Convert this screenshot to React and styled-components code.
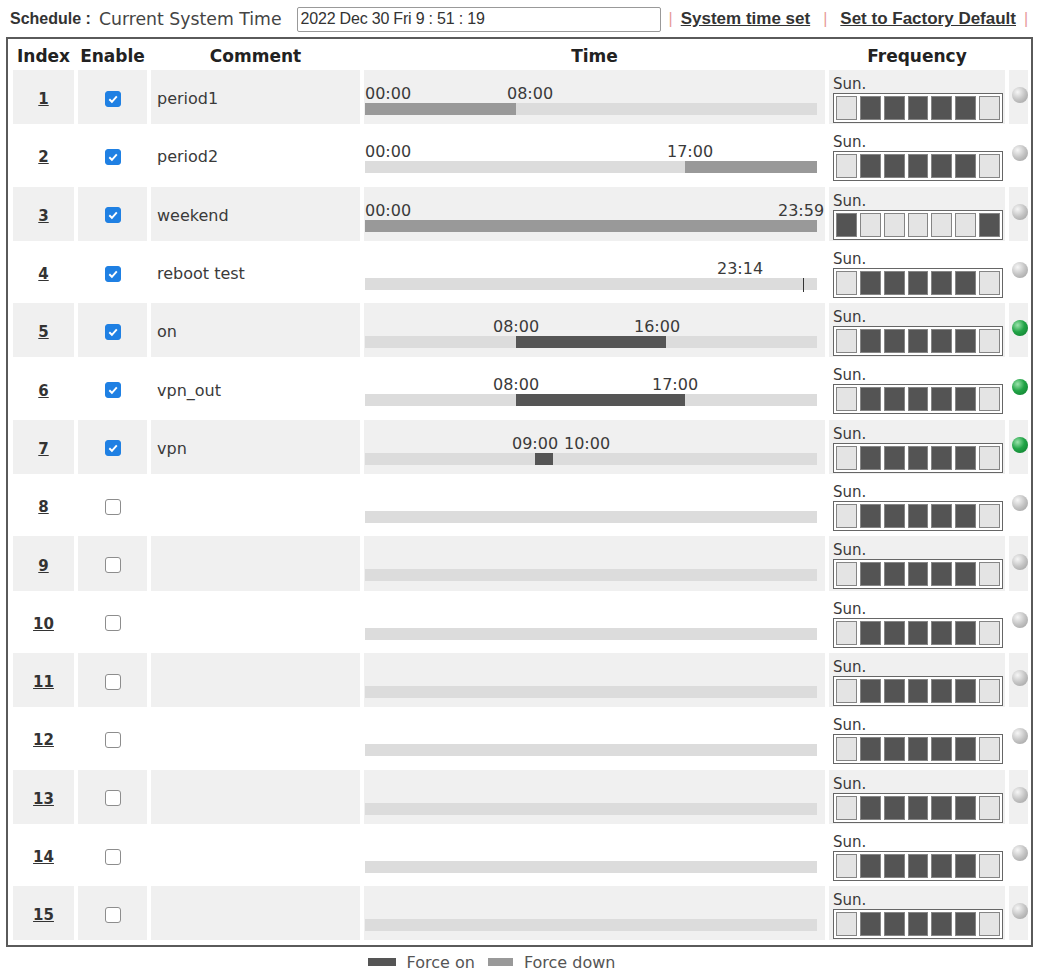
import React from "react";
import styled, { createGlobalStyle } from "styled-components";

const GlobalStyle = createGlobalStyle`
  body {
    margin: 0;
    background: #fff;
    font-family: "DejaVu Sans", Verdana, sans-serif;
    color: #333;
    overflow: hidden;
  }
`;

// 1 = day selected (dark square)
const WEEKDAYS = [0, 1, 1, 1, 1, 1, 0];

const schedules = [
  {
    id: 1, enabled: true, comment: "period1", led: "off", days: WEEKDAYS,
    labels: [[0, "00:00"], [142, "08:00"]],
    segment: { from: 0, to: 8, kind: "down" },
  },
  {
    id: 2, enabled: true, comment: "period2", led: "off", days: WEEKDAYS,
    labels: [[0, "00:00"], [302, "17:00"]],
    segment: { from: 17, to: 24, kind: "down" },
  },
  {
    id: 3, enabled: true, comment: "weekend", led: "off", days: [1, 0, 0, 0, 0, 0, 1],
    labels: [[0, "00:00"], [413, "23:59"]],
    segment: { from: 0, to: 23.983, kind: "down" },
  },
  {
    id: 4, enabled: true, comment: "reboot test", led: "off", days: WEEKDAYS,
    labels: [[352, "23:14"]],
    mark: 23.233,
  },
  {
    id: 5, enabled: true, comment: "on", led: "on", days: WEEKDAYS,
    labels: [[128, "08:00"], [269, "16:00"]],
    segment: { from: 8, to: 16, kind: "on" },
  },
  {
    id: 6, enabled: true, comment: "vpn_out", led: "on", days: WEEKDAYS,
    labels: [[128, "08:00"], [287, "17:00"]],
    segment: { from: 8, to: 17, kind: "on" },
  },
  {
    id: 7, enabled: true, comment: "vpn", led: "on", days: WEEKDAYS,
    labels: [[147, "09:00"], [199, "10:00"]],
    segment: { from: 9, to: 10, kind: "on" },
  },
];
for (let i = 8; i <= 15; i++) {
  schedules.push({ id: i, enabled: false, comment: "", led: "off", days: WEEKDAYS, labels: [] });
}

const Page = styled.div`
  padding: 6px 4px 0 6px;
`;

const TopBar = styled.div`
  display: flex;
  align-items: center;
  height: 26px;
  padding-left: 4px;
  margin-bottom: 5px;
  white-space: nowrap;

  & > * {
    flex-shrink: 0;
  }
`;

const BarTitle = styled.span`
  font-family: "Liberation Sans", Arial, sans-serif;
  font-weight: bold;
  font-size: 16px;
  color: #333;
`;

const BarText = styled.span`
  font-size: 17.3px;
  color: #444;
  margin-left: 8px;
`;

const TimeBox = styled.div`
  box-sizing: border-box;
  width: 364px;
  height: 25px;
  margin-left: 15px;
  border: 1px solid #999;
  border-radius: 2px;
  padding: 0 3px;
  display: flex;
  align-items: center;
  font-family: "Liberation Sans", Arial, sans-serif;
  font-size: 16px;
  letter-spacing: -0.2px;
  color: #333;
`;

const Sep = styled.span`
  color: #e79a9a;
  font-family: "Liberation Sans", Arial, sans-serif;
  font-size: 16px;
  margin: 0 ${(p) => p.$space}px;
`;

const TopLink = styled.a`
  font-family: "Liberation Sans", Arial, sans-serif;
  font-weight: bold;
  font-size: 17px;
  color: #333;
  text-decoration: underline;
  cursor: pointer;
`;

const Panel = styled.div`
  box-sizing: border-box;
  width: 1027px;
  border: 2px solid #5a5a5a;
  padding: 2px 3px 5px 5px;
  display: flex;
  flex-direction: column;
  gap: 4px;
`;

const Row = styled.div`
  display: grid;
  grid-template-columns: 61px 69px 209px 461px 176px 19px;
  column-gap: 4px;
  height: ${(p) => (p.$head ? "25px" : "54.3px")};
`;

const HeadCell = styled.div`
  display: flex;
  align-items: center;
  justify-content: center;
  padding-top: 5px;
  font-weight: bold;
  font-size: 17px;
  color: #222;
`;

const Cell = styled.div`
  background: ${(p) => (p.$shade ? "#f0f0f0" : "#fff")};
  display: flex;
  align-items: ${(p) => p.$align || "center"};
  justify-content: ${(p) => p.$justify || "flex-start"};
  box-sizing: border-box;
`;

const IndexLink = styled.a`
  font-weight: bold;
  font-size: 15px;
  color: #333;
  text-decoration: underline;
  padding-top: 4px;
`;

const CheckBox = styled.span`
  box-sizing: border-box;
  width: 16px;
  height: 16px;
  border-radius: 3px;
  display: flex;
  align-items: center;
  justify-content: center;
  background: ${(p) => (p.$checked ? "#1f80e3" : "#fff")};
  border: 1px solid ${(p) => (p.$checked ? "#1f80e3" : "#8d8d8d")};
  margin-top: 3px;
`;

const Comment = styled.span`
  font-size: 16px;
  color: #3a3a3a;
  padding-left: 6px;
  padding-top: 3px;
`;

const TimeArea = styled.div`
  padding: 15px 0 0 1px;
`;

const LabelLine = styled.div`
  position: relative;
  width: 452px;
  height: 18px;
`;

const TimeLabel = styled.span`
  position: absolute;
  top: 0;
  font-size: 16px;
  line-height: 18px;
  color: #3a3a3a;
  white-space: nowrap;
`;

const Track = styled.div`
  position: relative;
  width: 452px;
  height: 12px;
  background: #dcdcdc;
`;

const Segment = styled.div`
  position: absolute;
  top: 0;
  bottom: 0;
  background: ${(p) => (p.$kind === "on" ? "#555" : "#999")};
`;

const Mark = styled.div`
  position: absolute;
  top: 0;
  width: 1px;
  height: 14px;
  background: #333;
`;

const FreqArea = styled.div`
  padding: 6px 0 0 4px;
`;

const DayLabel = styled.div`
  font-size: 15px;
  line-height: 16px;
  color: #3a3a3a;
`;

const WeekBox = styled.div`
  box-sizing: border-box;
  margin-top: 1px;
  width: 170px;
  height: 30px;
  border: 1px solid #666;
  background: #fff;
  padding: 2px;
  display: flex;
  gap: 3px;
`;

const Day = styled.div`
  box-sizing: border-box;
  width: 21px;
  height: 24px;
  border: 1px solid #858585;
  background: ${(p) => (p.$on ? "#545454" : "#e4e4e4")};
`;

const Led = styled.span`
  width: 16px;
  height: 16px;
  border-radius: 50%;
  background: ${(p) =>
    p.$on
      ? "radial-gradient(circle at 35% 32%, #9be3ab 0%, #22a447 45%, #0c7a2c 100%)"
      : "radial-gradient(circle at 35% 32%, #f6f6f6 0%, #c4c4c4 50%, #9c9c9c 100%)"};
  margin: 0 0 4px 3px;
`;

const Legend = styled.div`
  display: flex;
  align-items: center;
  justify-content: center;
  height: 24px;
  margin-top: 3px;
  padding-right: 56px;
  font-size: 16px;
  color: #555;
`;

const Swatch = styled.span`
  width: ${(p) => p.$w}px;
  height: 8px;
  background: ${(p) => p.$color};
  margin-right: 11px;
  margin-left: ${(p) => p.$gap || 0}px;
`;

const pct = (h) => `${(h / 24) * 100}%`;

function Check({ checked }) {
  return (
    <CheckBox $checked={checked}>
      {checked && (
        <svg width="12" height="12" viewBox="0 0 12 12">
          <path d="M2.3 6.3 L4.9 8.8 L9.8 3.4" fill="none" stroke="#fff" strokeWidth="1.9" />
        </svg>
      )}
    </CheckBox>
  );
}

function ScheduleRow({ item }) {
  const shade = item.id % 2 === 1;
  return (
    <Row>
      <Cell $shade={shade} $justify="center">
        <IndexLink>{item.id}</IndexLink>
      </Cell>
      <Cell $shade={shade} $justify="center">
        <Check checked={item.enabled} />
      </Cell>
      <Cell $shade={shade}>
        <Comment>{item.comment}</Comment>
      </Cell>
      <Cell $shade={shade} $align="flex-start">
        <TimeArea>
          <LabelLine>
            {item.labels.map(([left, text]) => (
              <TimeLabel key={text + left} style={{ left }}>
                {text}
              </TimeLabel>
            ))}
          </LabelLine>
          <Track>
            {item.segment && (
              <Segment
                $kind={item.segment.kind}
                style={{
                  left: pct(item.segment.from),
                  width: pct(item.segment.to - item.segment.from),
                }}
              />
            )}
            {item.mark && <Mark style={{ left: pct(item.mark) }} />}
          </Track>
        </TimeArea>
      </Cell>
      <Cell $shade={shade} $align="flex-start">
        <FreqArea>
          <DayLabel>Sun.</DayLabel>
          <WeekBox>
            {item.days.map((d, i) => (
              <Day key={i} $on={d === 1} />
            ))}
          </WeekBox>
        </FreqArea>
      </Cell>
      <Cell $shade={shade} $justify="center">
        <Led $on={item.led === "on"} />
      </Cell>
    </Row>
  );
}

export default function App() {
  return (
    <>
      <GlobalStyle />
      <Page>
        <TopBar>
          <BarTitle>Schedule :</BarTitle>
          <BarText>Current System Time</BarText>
          <TimeBox>2022 Dec 30 Fri 9 : 51 : 19</TimeBox>
          <Sep $space={8}>|</Sep>
          <TopLink>System time set</TopLink>
          <Sep $space={13}>|</Sep>
          <TopLink>Set to Factory Default</TopLink>
          <Sep $space={8}>|</Sep>
        </TopBar>
        <Panel>
          <Row $head>
            <HeadCell>Index</HeadCell>
            <HeadCell>Enable</HeadCell>
            <HeadCell>Comment</HeadCell>
            <HeadCell>Time</HeadCell>
            <HeadCell>Frequency</HeadCell>
            <HeadCell />
          </Row>
          {schedules.map((item) => (
            <ScheduleRow key={item.id} item={item} />
          ))}
        </Panel>
        <Legend>
          <Swatch $w={28} $color="#555" />
          Force on
          <Swatch $w={25} $color="#999" $gap={13} />
          Force down
        </Legend>
      </Page>
    </>
  );
}
